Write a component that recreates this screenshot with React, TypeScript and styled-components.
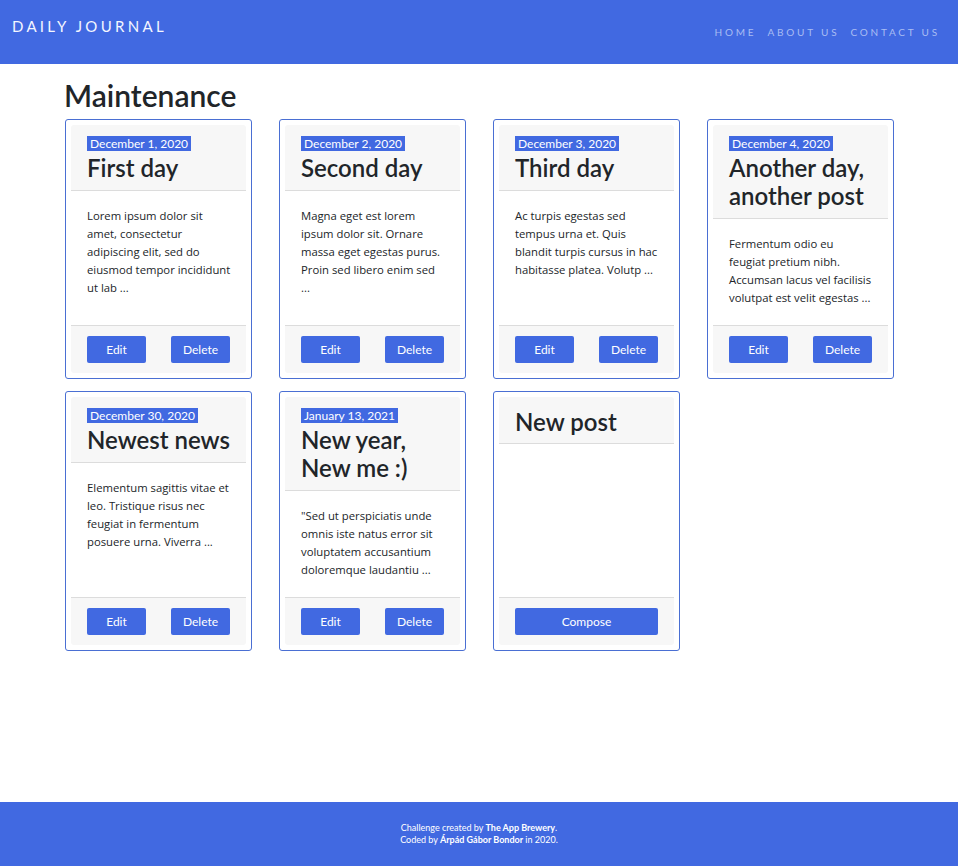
import styled, { createGlobalStyle } from 'styled-components'

const GlobalStyle = createGlobalStyle`
  * { box-sizing: border-box; }
  html, body { margin: 0; padding: 0; }
  body {
    font-family: Lato, "Open Sans", sans-serif;
    color: #212529;
    background: #ffffff;
  }
`

const Page = styled.div`
  min-height: 866px;
  display: flex;
  flex-direction: column;
`

const Navbar = styled.header`
  height: 64px;
  background: #4169e1;
  display: flex;
  justify-content: space-between;
  align-items: flex-start;
  padding: 0 18px 0 12px;
`

const Brand = styled.div`
  color: #f4f6ff;
  font-size: 15px;
  letter-spacing: 3.3px;
  margin-top: 17px;
`

const Nav = styled.nav`
  display: flex;
  gap: 11px;
  margin-top: 26px;
`

const NavLink = styled.a`
  color: #a9bdf3;
  font-size: 10px;
  letter-spacing: 2.8px;
  text-decoration: none;
`

const Main = styled.main`
  flex: 1;
  width: 828px;
  margin: 0 0 0 64px;
`

const Heading = styled.h1`
  font-size: 30px;
  font-weight: 600;
  margin: 15px 0 7px;
  line-height: 1.1;
`

const Grid = styled.div`
  display: grid;
  grid-template-columns: repeat(4, 187px);
  column-gap: 27px;
  row-gap: 12px;
  padding-left: 1px;
`

const Card = styled.div`
  height: 260px;
  border: 1px solid #4a6fd3;
  border-radius: 3px;
  padding: 5px;
  display: flex;
`

const Inner = styled.div`
  flex: 1;
  display: flex;
  flex-direction: column;
  border-radius: 3px;
  overflow: hidden;
`

const CardHead = styled.div<{ $plain?: boolean }>`
  background: #f7f7f7;
  border-bottom: 1px solid #dcdcdc;
  padding: ${(p) => (p.$plain ? '11px 16px 7px' : '11px 16px 8px')};
`

const DateTag = styled.div`
  background: #4169e1;
  color: #fff;
  font-size: 12px;
  padding: 0 3px;
  line-height: 15px;
  width: fit-content;
  margin-bottom: 3px;
`

const Title = styled.h2`
  font-size: 24px;
  font-weight: 600;
  margin: 0;
  line-height: 28px;
  color: #212529;
`

const Body = styled.div`
  flex: 1;
  background: #fff;
  padding: 16px 10px 16px 16px;
  font-family: "Open Sans", sans-serif;
  font-size: 11.3px;
  line-height: 18px;
  white-space: pre-line;
`

const Foot = styled.div`
  background: #f7f7f7;
  border-top: 1px solid #dcdcdc;
  padding: 10px 16px;
  display: flex;
  justify-content: space-between;
`

const Btn = styled.button<{ $wide?: boolean }>`
  background: #4169e1;
  color: #fff;
  border: none;
  border-radius: 2px;
  height: 27px;
  width: ${(p) => (p.$wide ? '100%' : '59px')};
  font-family: inherit;
  font-size: 12px;
  cursor: pointer;
`

const Footer = styled.footer`
  background: #4169e1;
  height: 64px;
  color: #fff;
  font-size: 9px;
  line-height: 12px;
  text-align: center;
  padding-top: 20px;
`

const posts = [
  { date: 'December 1, 2020', title: 'First day', text: 'Lorem ipsum dolor sit\namet, consectetur\nadipiscing elit, sed do\neiusmod tempor incididunt\nut lab ...' },
  { date: 'December 2, 2020', title: 'Second day', text: 'Magna eget est lorem\nipsum dolor sit. Ornare\nmassa eget egestas purus.\nProin sed libero enim sed\n...' },
  { date: 'December 3, 2020', title: 'Third day', text: 'Ac turpis egestas sed\ntempus urna et. Quis\nblandit turpis cursus in hac\nhabitasse platea. Volutp ...' },
  { date: 'December 4, 2020', title: 'Another day, another post', text: 'Fermentum odio eu\nfeugiat pretium nibh.\nAccumsan lacus vel facilisis\nvolutpat est velit egestas ...' },
  { date: 'December 30, 2020', title: 'Newest news', text: 'Elementum sagittis vitae et\nleo. Tristique risus nec\nfeugiat in fermentum\nposuere urna. Viverra ...' },
  { date: 'January 13, 2021', title: 'New year, New me :)', text: '"Sed ut perspiciatis unde\nomnis iste natus error sit\nvoluptatem accusantium\ndoloremque laudantiu ...' },
]

export default function App() {
  return (
    <Page>
      <GlobalStyle />
      <Navbar>
        <Brand>DAILY JOURNAL</Brand>
        <Nav>
          <NavLink>HOME</NavLink>
          <NavLink>ABOUT US</NavLink>
          <NavLink>CONTACT US</NavLink>
        </Nav>
      </Navbar>
      <Main>
        <Heading>Maintenance</Heading>
        <Grid>
          {posts.map((p) => (
            <Card key={p.title}>
              <Inner>
                <CardHead>
                  <DateTag>{p.date}</DateTag>
                  <Title>{p.title}</Title>
                </CardHead>
                <Body>{p.text}</Body>
                <Foot>
                  <Btn>Edit</Btn>
                  <Btn>Delete</Btn>
                </Foot>
              </Inner>
            </Card>
          ))}
          <Card>
            <Inner>
              <CardHead $plain>
                <Title>New post</Title>
              </CardHead>
              <Body />
              <Foot>
                <Btn $wide>Compose</Btn>
              </Foot>
            </Inner>
          </Card>
        </Grid>
      </Main>
      <Footer>
        <div>Challenge created by <b>The App Brewery</b>.</div>
        <div>Coded by <b>Árpád Gábor Bondor</b> in 2020.</div>
      </Footer>
    </Page>
  )
}
